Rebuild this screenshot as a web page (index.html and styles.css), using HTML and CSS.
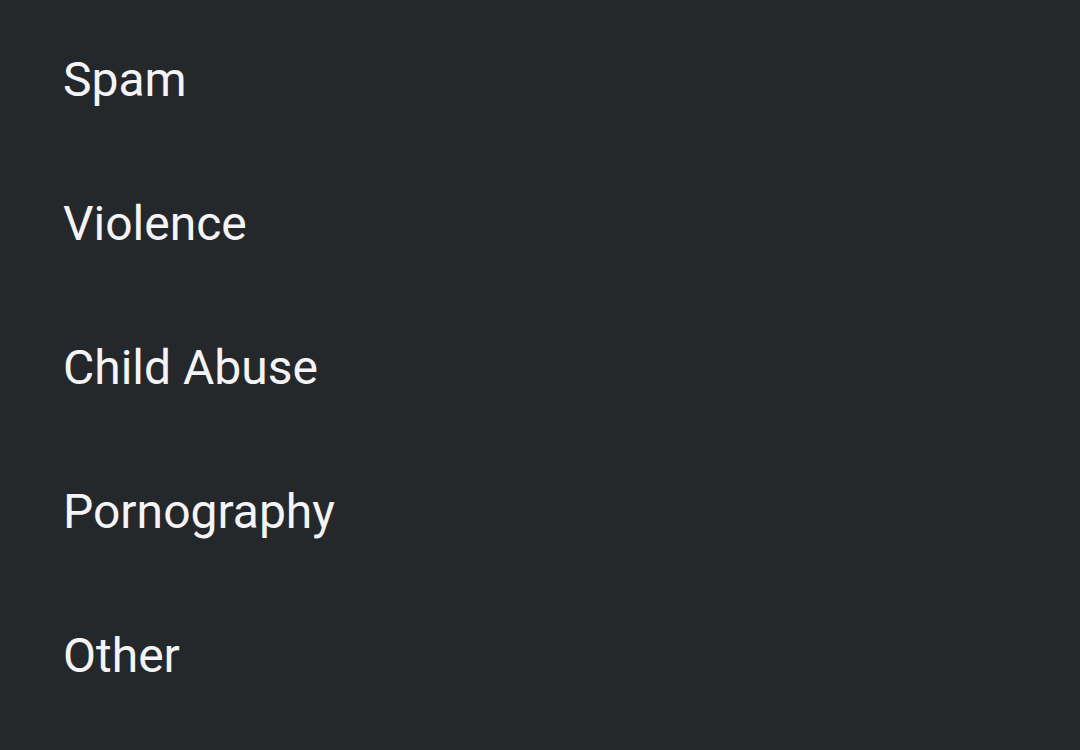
FILE: index.html
```html
<!DOCTYPE html>
<html lang="en">

<head>
  <meta charset="UTF-8">
  <meta name="viewport" content="width=device-width, initial-scale=1.0">
  <title>Report</title>
  <link rel="stylesheet" href="styles.css">
</head>

<body>
  <ul class="reasons">
    <li class="reason">Spam</li>
    <li class="reason">Violence</li>
    <li class="reason">Child Abuse</li>
    <li class="reason">Pornography</li>
    <li class="reason">Other</li>
  </ul>
</body>

</html>
```

FILE: styles.css
```css
body {
  margin: 0;
  padding: 0;
  background-color: #25282b;
  color: #f4f4f6;
  font-family: Roboto, "Noto Sans", sans-serif;
  height: 750px;
  overflow: hidden;
}

.reasons {
  list-style: none;
  margin: 0;
  padding: 8px 0 0 0;
}

.reason {
  height: 144px;
  line-height: 144px;
  padding-left: 63px;
  font-size: 48px;
}
```
